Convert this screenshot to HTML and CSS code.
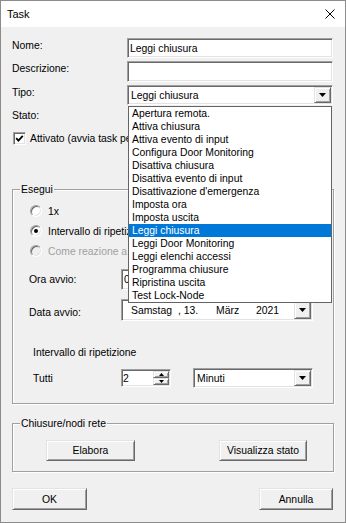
FILE: index.html
```html
<!DOCTYPE html>
<html>
<head>
<meta charset="utf-8">
<title>Task</title>
<link rel="stylesheet" href="styles.css">
</head>
<body>
<div class="window">
  <div class="titlebar">
    <span class="title">Task</span>
    <svg class="close" width="10" height="10" viewBox="0 0 10 10"><path d="M0.5 0.5L9.5 9.5M9.5 0.5L0.5 9.5" stroke="#000" stroke-width="1" fill="none"/></svg>
  </div>
  <div class="content">
    <div class="form">
      <span class="lbl">Nome:</span>
      <div class="edit"><span class="val">Leggi chiusura</span></div>
      <span class="lbl">Descrizione:</span>
      <div class="edit"></div>
      <span class="lbl">Tipo:</span>
      <div class="combo tipo">
        <span class="val">Leggi chiusura</span>
        <span class="dropbtn"><svg width="7" height="4" viewBox="0 0 7 4"><path d="M0 0H7L3.5 4Z"/></svg></span>
        <ul class="droplist">
          <li>Apertura remota.</li>
          <li>Attiva chiusura</li>
          <li>Attiva evento di input</li>
          <li>Configura Door Monitoring</li>
          <li>Disattiva chiusura</li>
          <li>Disattiva evento di input</li>
          <li>Disattivazione d'emergenza</li>
          <li>Imposta ora</li>
          <li>Imposta uscita</li>
          <li class="sel">Leggi chiusura</li>
          <li>Leggi Door Monitoring</li>
          <li>Leggi elenchi accessi</li>
          <li>Programma chiusure</li>
          <li>Ripristina uscita</li>
          <li>Test Lock-Node</li>
        </ul>
      </div>
    </div>
    <div class="stato">Stato:</div>
    <div class="check-row">
      <span class="checkbox"><svg width="9" height="9" viewBox="0 0 9 9"><path d="M1.2 4.2L3.4 6.6L7.8 1.8" stroke="#000" stroke-width="1.8" fill="none"/></svg></span>
      <span>Attivato (avvia task periodicamente)</span>
    </div>

    <fieldset class="group esegui">
      <legend>Esegui</legend>
      <div class="radio-row"><span class="radio"></span><span>1x</span></div>
      <div class="radio-row"><span class="radio on"></span><span>Intervallo di ripetizione</span></div>
      <div class="radio-row disabled"><span class="radio"></span><span>Come reazione a un evento</span></div>

      <div class="field-row ora">
        <span class="flbl">Ora avvio:</span>
        <div class="edit time"><span class="val">09:00:00</span></div>
      </div>
      <div class="field-row data">
        <span class="flbl">Data avvio:</span>
        <div class="combo date">
          <span class="val date-val"><span class="d1">Samstag</span><span class="d2">, 13.</span><span class="d3">März</span><span class="d4">2021</span></span>
          <span class="dropbtn"><svg width="7" height="4" viewBox="0 0 7 4"><path d="M0 0H7L3.5 4Z"/></svg></span>
        </div>
      </div>

      <div class="sub-title">Intervallo di ripetizione</div>
      <div class="field-row tutti">
        <span class="flbl">Tutti</span>
        <div class="edit spin">
          <span class="val">2</span>
          <span class="spin-btns">
            <span class="sbtn"><svg width="5" height="3" viewBox="0 0 5 3"><path d="M2.5 0L5 3H0Z"/></svg></span>
            <span class="sbtn"><svg width="5" height="3" viewBox="0 0 5 3"><path d="M0 0H5L2.5 3Z"/></svg></span>
          </span>
        </div>
        <div class="combo minuti">
          <span class="val">Minuti</span>
          <span class="dropbtn"><svg width="7" height="4" viewBox="0 0 7 4"><path d="M0 0H7L3.5 4Z"/></svg></span>
        </div>
      </div>
    </fieldset>

    <fieldset class="group chiusure">
      <legend>Chiusure/nodi rete</legend>
      <div class="btn-row">
        <button class="btn elabora">Elabora</button>
        <button class="btn visual">Visualizza stato</button>
      </div>
    </fieldset>

    <div class="footer">
      <button class="btn ok">OK</button>
      <button class="btn annulla">Annulla</button>
    </div>
  </div>
</div>
</body>
</html>
```

FILE: styles.css
```css
* { box-sizing: border-box; }
html, body { margin: 0; padding: 0; }
body {
  font-family: "Liberation Sans", Arial, sans-serif;
  font-size: 10.4px;
  color: #000;
  background: #f0f0f0;
}
.window {
  width: 346px;
  height: 523px;
  border: 1px solid #8c8c8c;
  background: #f0f0f0;
  display: flex;
  flex-direction: column;
}
.titlebar {
  flex: none;
  height: 26px;
  background: #fff;
  display: flex;
  align-items: center;
  justify-content: space-between;
  padding: 0 10px 0 6px;
}
.title { font-size: 11px; }
.close { display: block; }

.content {
  flex: 1;
  padding: 11px 11px 0 11px;
}

/* sunken field */
.edit, .combo {
  background: #fff;
  border: 1px solid;
  border-color: #a0a0a0 #fff #fff #a0a0a0;
  box-shadow: inset 1px 1px 0 #696969, inset -1px -1px 0 #e3e3e3;
  display: flex;
  align-items: center;
}
.val { padding-left: 2px; white-space: nowrap; overflow: hidden; flex: 1; line-height: 13px; }
.combo .val { padding-left: 3px; }

/* raised */
.dropbtn, .sbtn, .btn {
  background: #f0f0f0;
  border: 1px solid;
  border-color: #e3e3e3 #696969 #696969 #e3e3e3;
  box-shadow: inset 1px 1px 0 #fff, inset -1px -1px 0 #a0a0a0;
  display: flex;
  align-items: center;
  justify-content: center;
}
.dropbtn {
  flex: none;
  width: 17px;
  align-self: stretch;
  margin: 1px 1px 1px 0;
}
.dropbtn svg, .sbtn svg { display: block; }

.form {
  display: grid;
  grid-template-columns: 115px 206px;
  grid-template-rows: 20px 21px 20px;
  row-gap: 3px;
  align-items: start;
}
.form .edit, .form .combo { height: 100%; }
.lbl { line-height: 13px; padding-top: 1px; }

.tipo { position: relative; }
.droplist {
  position: absolute;
  z-index: 10;
  left: 0;
  top: calc(100% + 2px);
  width: 100%;
  margin: 0;
  padding: 0;
  list-style: none;
  background: #fff;
  border: 1px solid #646464;
}
.droplist li {
  height: 13px;
  line-height: 13px;
  padding-left: 3px;
  white-space: nowrap;
}
.droplist li.sel {
  background: #0078d7;
  color: #fff;
}

.stato { margin-top: 4px; line-height: 13px; }
.check-row {
  margin-top: 10px;
  height: 13px;
  display: flex;
  align-items: center;
  gap: 4px;
  padding-left: 1px;
  white-space: nowrap;
  line-height: 13px;
}
.checkbox {
  flex: none;
  width: 13px;
  height: 13px;
  background: #fff;
  border: 1px solid;
  border-color: #a0a0a0 #fff #fff #a0a0a0;
  box-shadow: inset 1px 1px 0 #696969, inset -1px -1px 0 #e3e3e3;
  display: flex;
  align-items: center;
  justify-content: center;
}
.checkbox svg { display: block; }

.group {
  margin: 0;
  padding: 0;
  min-width: 0;
  border: 1px solid #a0a0a0;
  box-shadow: inset 1px 1px 0 #fff, 1px 1px 0 #fff;
}
.group legend {
  margin-left: 7px;
  padding: 0 1px;
  line-height: 13px;
  background: #f0f0f0;
}
.esegui { margin-top: 38px; padding: 5px 0 15px 0; }

.radio-row {
  height: 20px;
  display: flex;
  align-items: center;
  gap: 6px;
  margin-left: 17px;
  white-space: nowrap;
  line-height: 13px;
}
.radio {
  flex: none;
  width: 12px;
  height: 12px;
  border-radius: 50%;
  background: #fff;
  border: 1px solid;
  border-color: #a0a0a0 #fff #fff #a0a0a0;
  box-shadow: inset 1px 1px 0 #696969, inset -1px -1px 0 #e3e3e3;
  display: flex;
  align-items: center;
  justify-content: center;
}
.radio.on::after {
  content: "";
  width: 4px;
  height: 4px;
  border-radius: 50%;
  background: #000;
}
.radio-row.disabled { color: #a0a0a0; }
.radio-row.disabled .radio { background: #f0f0f0; }

.field-row {
  display: flex;
  align-items: center;
  margin-left: 16px;
}
.flbl { flex: none; width: 92px; line-height: 13px; }
.ora { margin-top: 8px; height: 21px; }
.ora .time { width: 95px; height: 21px; }
.data { margin-top: 9px; height: 22px; }
.data .flbl { padding-top: 4px; }
.date { width: 192px; height: 22px; }
.date-val { padding-left: 9px !important; display: flex; }
.d1 { width: 47px; }
.d2 { width: 38px; }
.d3 { width: 40px; }

.sub-title { margin-top: 25px; margin-left: 20px; line-height: 13px; }
.tutti { margin-top: 9px; height: 20px; margin-left: 20px; }
.tutti .flbl { width: 88px; }
.spin { width: 50px; height: 18px; }
.spin .val { padding-left: 1px; }
.spin-btns {
  flex: none;
  width: 16px;
  align-self: stretch;
  margin: 1px 1px 1px 0;
  display: flex;
  flex-direction: column;
}
.sbtn { flex: 1; }
.minuti { width: 120px; height: 20px; margin-left: 22px; }

.btn {
  font-family: inherit;
  font-size: 10.4px;
  color: #000;
  padding: 0;
  height: 21px;
}
.chiusure { margin-top: 13px; padding: 10px 0 10px 0; }
.btn-row { display: flex; }
.elabora { width: 89px; margin-left: 33px; }
.visual { width: 88px; margin-left: 84px; }

.footer {
  margin-top: 16px;
  padding-right: 1px;
  display: flex;
  justify-content: space-between;
}
.footer .btn { height: 22px; }
.ok { width: 75px; }
.annulla { width: 74px; }
```
